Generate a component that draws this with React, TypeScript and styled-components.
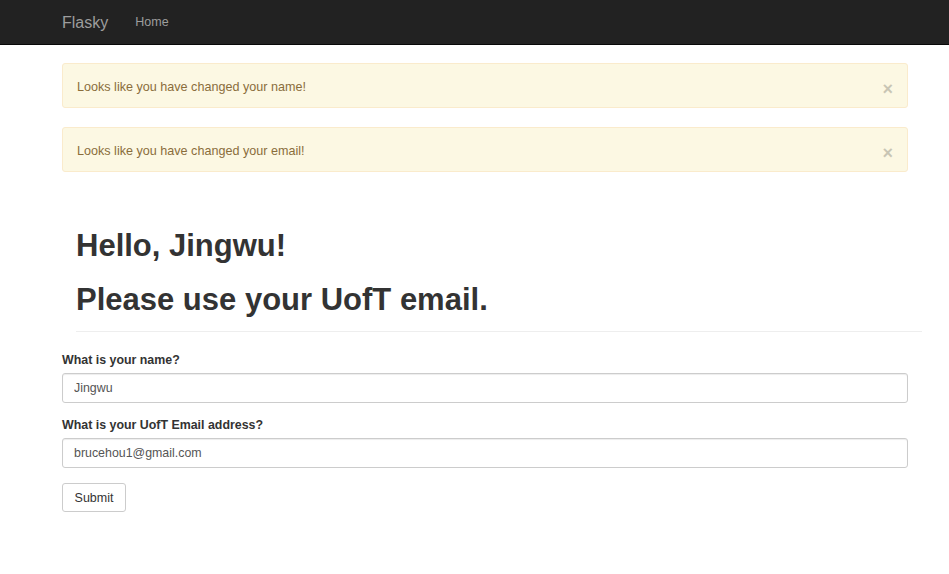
import styled, { createGlobalStyle } from 'styled-components'

const GlobalStyle = createGlobalStyle`
  * {
    box-sizing: border-box;
  }

  body {
    margin: 0;
    background: #fff;
    color: #333;
    font-family: 'Liberation Sans', Arial, sans-serif;
    font-size: 12px;
  }
`

const Navbar = styled.nav`
  height: 45px;
  background-color: #222;
  border-bottom: 1px solid #080808;
  display: flex;
  align-items: center;
  padding-left: 62px;
`

const Brand = styled.a`
  color: #9d9d9d;
  font-size: 16px;
  text-decoration: none;
  margin-top: 1px;
`

const NavLink = styled.a`
  color: #9d9d9d;
  font-size: 12.5px;
  text-decoration: none;
  margin-left: 27px;
`

const Container = styled.main`
  width: 846px;
  margin-left: 62px;
  padding-top: 18px;
`

const Alert = styled.div`
  position: relative;
  height: 45px;
  display: flex;
  align-items: center;
  padding: 2px 14px 0;
  margin-bottom: 19px;
  background-color: #fcf8e3;
  border: 1px solid #faebcc;
  border-radius: 3px;
  color: #8a6d3b;
  font-size: 12.6px;
`

const Close = styled.button`
  position: absolute;
  right: 14px;
  top: 16px;
  padding: 0;
  border: 0;
  background: transparent;
  font-family: 'Liberation Sans', Arial, sans-serif;
  font-size: 18px;
  font-weight: bold;
  line-height: 1;
  color: #000;
  opacity: 0.2;
  cursor: pointer;
`

const PageHeader = styled.div`
  width: 846px;
  margin: 57px 0 20px 14px;
  padding-bottom: 15px;
  border-bottom: 1px solid #eee;
`

const Title = styled.h1`
  margin: 0;
  font-size: 31px;
  line-height: 33px;
  font-weight: bold;
  color: #333;

  & + & {
    margin-top: 21px;
  }
`

const Form = styled.form`
  display: flex;
  flex-direction: column;
`

const Group = styled.div`
  margin-bottom: 14px;
`

const Label = styled.label`
  display: block;
  font-size: 12.4px;
  font-weight: bold;
  line-height: 17px;
  margin-bottom: 4px;
`

const Input = styled.input`
  display: block;
  width: 100%;
  height: 30px;
  padding: 0 11px;
  border: 1px solid #ccc;
  border-radius: 3px;
  font-family: 'Liberation Sans', Arial, sans-serif;
  font-size: 12.4px;
  color: #555;
  box-shadow: inset 0 1px 1px rgba(0, 0, 0, 0.075);
`

const Button = styled.button`
  align-self: flex-start;
  margin-top: 1px;
  width: 64px;
  height: 29px;
  background: #fff;
  border: 1px solid #ccc;
  border-radius: 3px;
  font-family: 'Liberation Sans', Arial, sans-serif;
  font-size: 12.5px;
  color: #333;
`

const App = () => {
  return (
    <>
      <GlobalStyle />
      <Navbar>
        <Brand href="#">Flasky</Brand>
        <NavLink href="#">Home</NavLink>
      </Navbar>
      <Container>
        <Alert>
          Looks like you have changed your name!
          <Close type="button">×</Close>
        </Alert>
        <Alert>
          Looks like you have changed your email!
          <Close type="button">×</Close>
        </Alert>
        <PageHeader>
          <Title>Hello, Jingwu!</Title>
          <Title>Please use your UofT email.</Title>
        </PageHeader>
        <Form onSubmit={(e) => e.preventDefault()}>
          <Group>
            <Label htmlFor="name">What is your name?</Label>
            <Input id="name" defaultValue="Jingwu" />
          </Group>
          <Group>
            <Label htmlFor="email">What is your UofT Email address?</Label>
            <Input id="email" defaultValue="brucehou1@gmail.com" />
          </Group>
          <Button type="submit">Submit</Button>
        </Form>
      </Container>
    </>
  )
}

export default App
